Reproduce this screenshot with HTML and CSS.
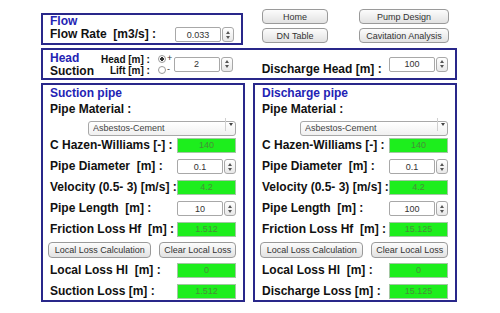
FILE: index.html
```html
<!DOCTYPE html>
<html>
  <head>
    <meta charset="UTF-8" />
    <title>Pump Head</title>
    <link rel="stylesheet" href="styles.css">
  </head>
  <body>
  <div class="page">

    <div class="top">
      <div class="box flow">
        <h2>Flow</h2>
        <div class="row">
          <span class="label">Flow Rate&nbsp; [m3/s] :</span>
          <span class="num"><input class="field" type="text" value="0.033" /><span class="spin"><i class="up"></i><i class="down"></i></span></span>
        </div>
      </div>
      <div class="nav">
        <button>Home</button>
        <button>Pump Design</button>
        <button>DN Table</button>
        <button>Cavitation Analysis</button>
      </div>
    </div>

    <div class="box head">
      <div class="head-title">
        <h2>Head</h2>
        <div class="label">Suction</div>
      </div>
      <div class="head-labels">
        <div>Head [m] :</div>
        <div>Lift [m] :</div>
      </div>
      <div class="radios">
        <div><span class="radio checked"></span>+</div>
        <div><span class="radio"></span>-</div>
      </div>
      <span class="num"><input class="field" type="text" value="2" /><span class="spin"><i class="up"></i><i class="down"></i></span></span>
      <span class="label disch-label">Discharge Head [m] :</span>
      <span class="num"><input class="field" type="text" value="100" /><span class="spin"><i class="up"></i><i class="down"></i></span></span>
    </div>

    <div class="pipes">
      <div class="box pipe">
        <h2>Suction pipe</h2>
        <div class="label material">Pipe Material :</div>
        <span class="select"><select><option>Asbestos-Cement</option></select></span>
        <div class="row">
          <span class="label">C Hazen-Williams [-] :</span>
          <span class="out">140</span>
        </div>
        <div class="row">
          <span class="label">Pipe Diameter&nbsp; [m] :</span>
          <span class="num"><input class="field" type="text" value="0.1" /><span class="spin"><i class="up"></i><i class="down"></i></span></span>
        </div>
        <div class="row">
          <span class="label">Velocity (0.5- 3) [m/s] :</span>
          <span class="out">4.2</span>
        </div>
        <div class="row">
          <span class="label">Pipe Length&nbsp; [m] :</span>
          <span class="num"><input class="field" type="text" value="10" /><span class="spin"><i class="up"></i><i class="down"></i></span></span>
        </div>
        <div class="row">
          <span class="label">Friction Loss Hf&nbsp; [m] :</span>
          <span class="out">1.512</span>
        </div>
        <div class="row buttons">
          <button class="calc">Local Loss Calculation</button>
          <button class="clear">Clear Local Loss</button>
        </div>
        <div class="row after-buttons">
          <span class="label">Local Loss Hl&nbsp; [m] :</span>
          <span class="out">0</span>
        </div>
        <div class="row">
          <span class="label">Suction Loss [m] :</span>
          <span class="out">1.512</span>
        </div>
      </div>

      <div class="box pipe">
        <h2>Discharge pipe</h2>
        <div class="label material">Pipe Material :</div>
        <span class="select"><select><option>Asbestos-Cement</option></select></span>
        <div class="row">
          <span class="label">C Hazen-Williams [-] :</span>
          <span class="out">140</span>
        </div>
        <div class="row">
          <span class="label">Pipe Diameter&nbsp; [m] :</span>
          <span class="num"><input class="field" type="text" value="0.1" /><span class="spin"><i class="up"></i><i class="down"></i></span></span>
        </div>
        <div class="row">
          <span class="label">Velocity (0.5- 3) [m/s] :</span>
          <span class="out">4.2</span>
        </div>
        <div class="row">
          <span class="label">Pipe Length&nbsp; [m] :</span>
          <span class="num"><input class="field" type="text" value="100" /><span class="spin"><i class="up"></i><i class="down"></i></span></span>
        </div>
        <div class="row">
          <span class="label">Friction Loss Hf&nbsp; [m] :</span>
          <span class="out">15.125</span>
        </div>
        <div class="row buttons">
          <button class="calc">Local Loss Calculation</button>
          <button class="clear">Clear Local Loss</button>
        </div>
        <div class="row after-buttons">
          <span class="label">Local Loss Hl&nbsp; [m] :</span>
          <span class="out">0</span>
        </div>
        <div class="row">
          <span class="label">Discharge Loss [m] :</span>
          <span class="out">15.125</span>
        </div>
      </div>
    </div>

  </div>
  </body>
</html>
```

FILE: styles.css
```css
body {
  margin: 0;
  font-family: "Liberation Sans", Arial, sans-serif;
  background: #FFFFFF;
  color: #111111;
}

h2 {
  margin: 0;
  font-size: 12px;
  line-height: 13px;
  color: #2323B4;
}

button {
  margin: 0;
  padding: 0;
  height: 15px;
  font-family: "Liberation Sans", Arial, sans-serif;
  font-size: 9px;
  color: #333333;
  background: linear-gradient(#FCFCFC, #E2E2E2);
  border: 1px solid #9A9A9A;
  border-radius: 4px;
}

.page {
  width: 416px;
  padding: 9px 0 0 41px;
}

.top {
  display: flex;
  align-items: flex-start;
}

.box {
  box-sizing: border-box;
  border: 2px solid #29278A;
  padding: 0 7px;
}

.label {
  font-size: 12px;
  font-weight: bold;
  line-height: 13px;
  white-space: nowrap;
}

.row {
  display: flex;
  align-items: center;
  height: 15px;
  margin-top: 6px;
}

.row .label {
  flex: 1;
  min-width: 0;
}

/* flow box */
.flow {
  width: 202px;
  height: 32px;
  margin-top: 4px;
}

.flow .row {
  height: 13px;
  margin-top: 0;
}

.nav {
  display: grid;
  grid-template-columns: 66px 90px;
  column-gap: 31px;
  row-gap: 4px;
  margin-left: 19px;
}

/* inputs */
.num {
  display: flex;
  width: 59px;
  height: 15px;
}

.field {
  box-sizing: border-box;
  width: 46px;
  height: 15px;
  margin: 0;
  padding: 0;
  border: 1px solid #A8A8A8;
  border-radius: 2px;
  font-family: "Liberation Sans", Arial, sans-serif;
  font-size: 9px;
  color: #333333;
  text-align: center;
}

.spin {
  box-sizing: border-box;
  width: 12px;
  height: 15px;
  margin-left: 1px;
  border: 1px solid #A8A8A8;
  border-radius: 3px;
  background: linear-gradient(#FFFFFF, #E8E8E8);
  display: flex;
  flex-direction: column;
  align-items: center;
  justify-content: center;
  gap: 2px;
}

.spin i {
  width: 0;
  height: 0;
  border-left: 2px solid transparent;
  border-right: 2px solid transparent;
}

.spin .up {
  border-bottom: 3px solid #555555;
}

.spin .down {
  border-top: 3px solid #555555;
}

.out {
  box-sizing: border-box;
  width: 59px;
  height: 15px;
  background: #1DEE1D;
  border: 1px solid #A3C8A3;
  font-size: 9px;
  line-height: 13px;
  color: #469038;
  text-align: center;
}

/* head box */
.head {
  display: flex;
  align-items: center;
  height: 32px;
  margin-top: 3px;
}

.head-title {
  width: 46px;
}

.head-title .label {
  line-height: 12px;
}

.head-labels {
  width: 56px;
  font-size: 10px;
  font-weight: bold;
  line-height: 11px;
  text-align: right;
  white-space: nowrap;
  padding-top: 2px;
}

.radios {
  width: 16px;
  margin-left: 8px;
  font-size: 9px;
  line-height: 11px;
  color: #333333;
}

.radios div {
  display: flex;
  align-items: center;
}

.radio {
  box-sizing: border-box;
  width: 8px;
  height: 8px;
  margin-right: 1px;
  border: 1px solid #9A9A9A;
  border-radius: 50%;
  background: #FFFFFF;
}

.radio.checked {
  background: radial-gradient(circle, #333333 0 1.6px, #FFFFFF 2px);
}

.disch-label {
  align-self: flex-end;
  margin: 0 0 2px 29px;
  width: 130px;
}

/* pipe boxes */
.pipes {
  display: flex;
  gap: 8px;
  margin-top: 3px;
}

.pipe {
  width: 204px;
  height: 219px;
  padding-top: 2px;
}

.material {
  margin-top: 3px;
}

.select {
  position: relative;
  display: block;
  width: 148px;
  height: 15px;
  margin: 1px 0 5px 38px;
}

.select select {
  box-sizing: border-box;
  width: 148px;
  height: 15px;
  margin: 0;
  padding: 0 0 0 4px;
  -webkit-appearance: none;
  appearance: none;
  border: 1px solid #A8A8A8;
  border-radius: 3px;
  background: linear-gradient(#FFFFFF, #F0F0F0);
  font-family: "Liberation Sans", Arial, sans-serif;
  font-size: 9px;
  color: #444444;
}

.select::after {
  content: "";
  position: absolute;
  right: 3px;
  top: 6px;
  border-left: 2px solid transparent;
  border-right: 2px solid transparent;
  border-top: 3px solid #444444;
}

.select::before {
  content: "";
  position: absolute;
  right: 10px;
  top: 1px;
  height: 13px;
  border-left: 1px solid #D0D0D0;
}

.pipe .row:first-of-type {
  margin-top: 0;
}

.buttons {
  height: 16px;
  margin-top: 5px;
  margin-left: -2px;
}

.buttons button {
  height: 16px;
}

.calc {
  width: 104px;
}

.clear {
  width: 77px;
  margin-left: 8px;
}

.after-buttons {
  margin-top: 5px;
}
```
